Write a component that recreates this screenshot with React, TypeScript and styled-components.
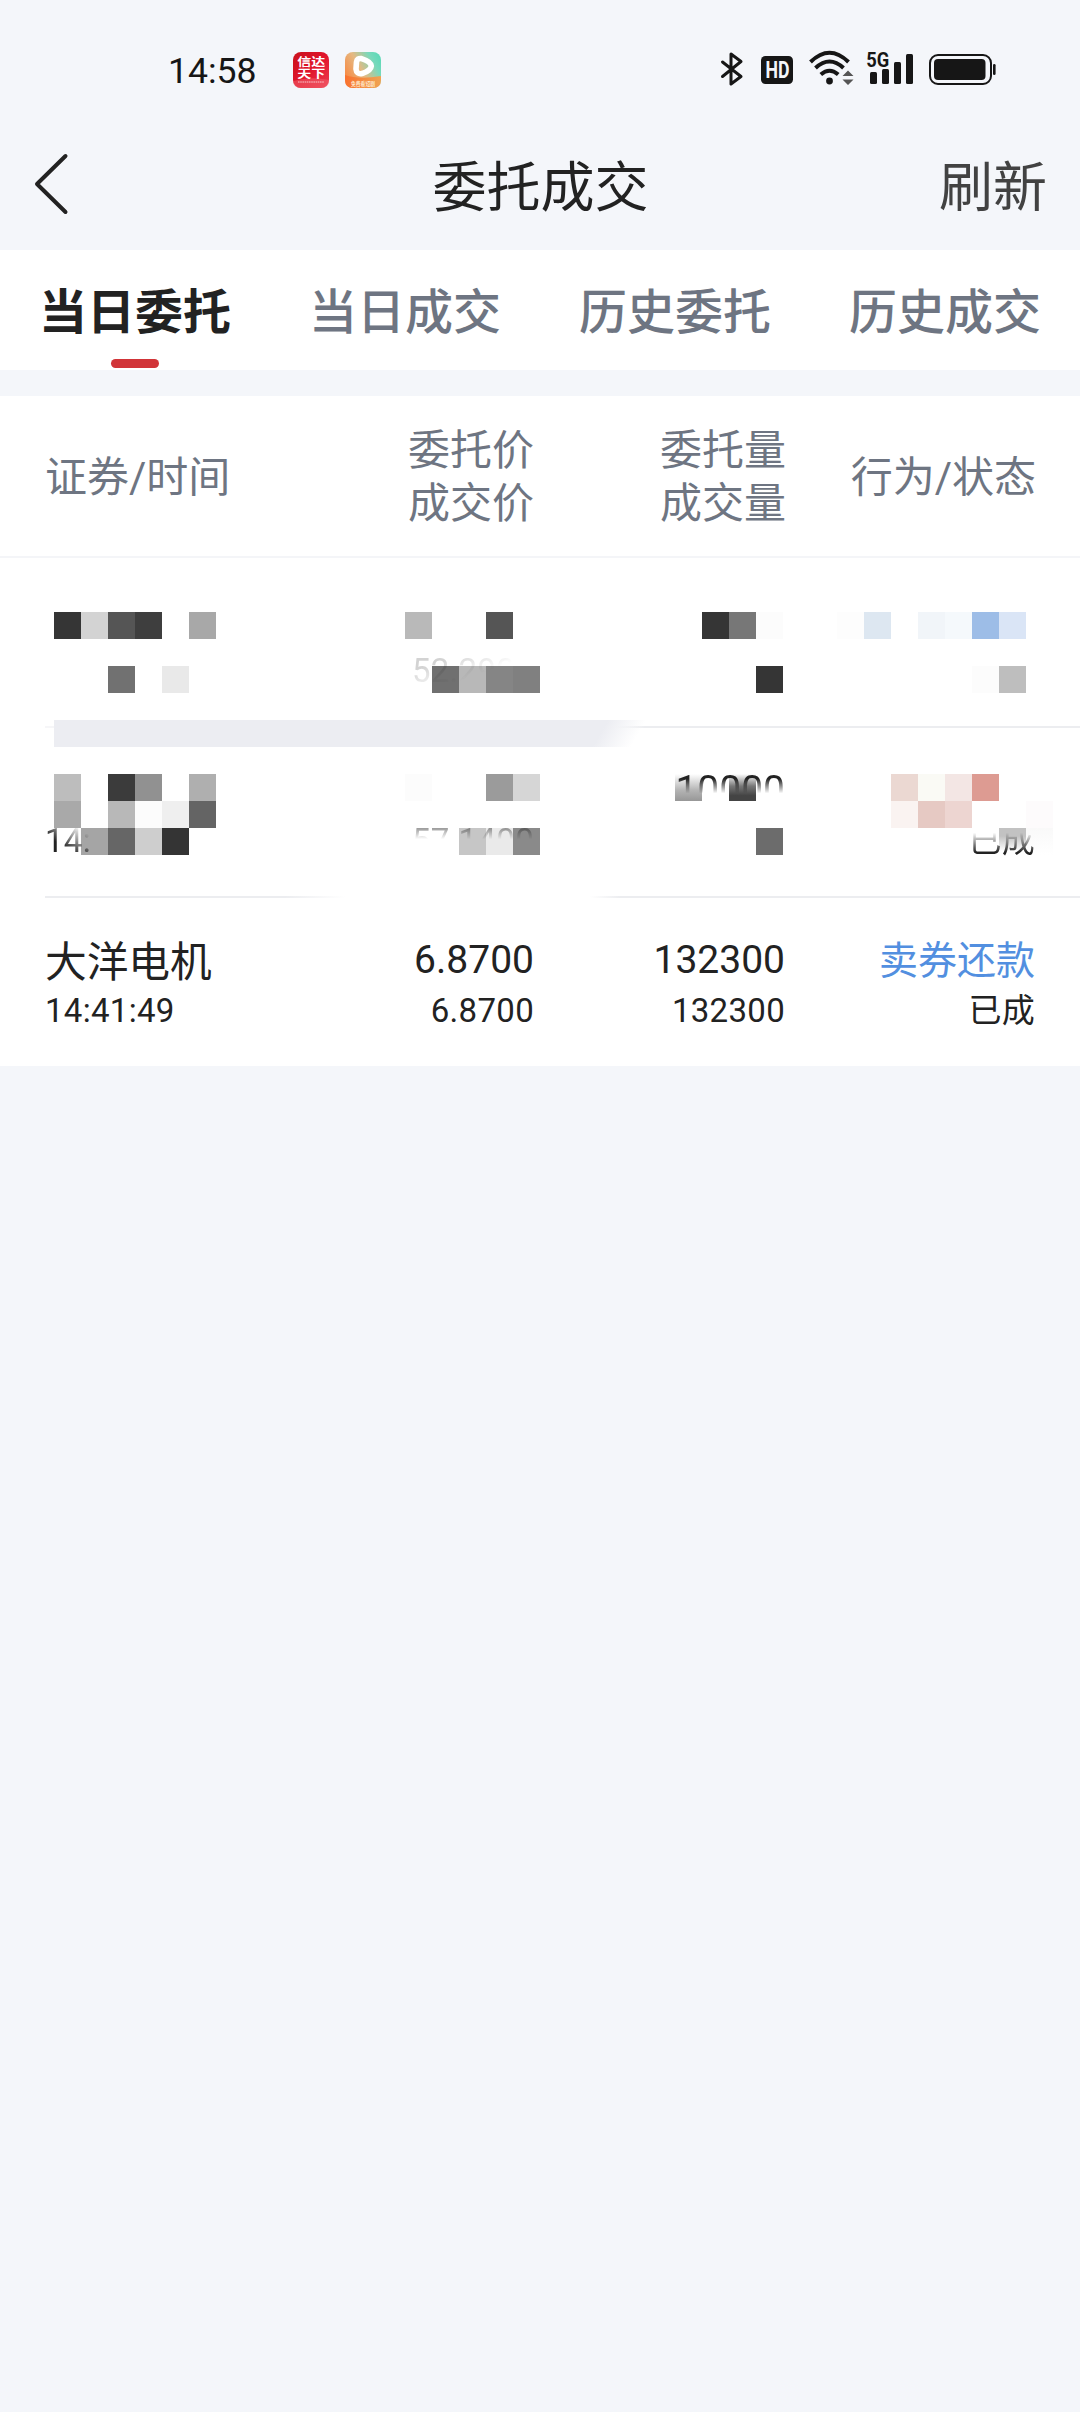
import React from "react";
import styled, { createGlobalStyle } from "styled-components";

const GlobalStyle = createGlobalStyle`
  * { box-sizing: border-box; }
  html, body { margin: 0; padding: 0; background: #f4f6fa; }
  body { font-family: Roboto, "Noto Sans CJK SC", sans-serif; color: #222; }
`;

const Page = styled.main`
  width: 1080px;
  min-height: 2412px;
  background: #f4f6fa;
  display: flex;
  flex-direction: column;
`;

const StatusBar = styled.header`
  height: 100px;
  padding: 40px 84px 0 168px;
  display: flex;
  justify-content: space-between;
`;

const StatusGroup = styled.div`
  display: flex;
  height: 60px;
  align-items: center;
`;

const Clock = styled.span`
  font-size: 35.6px;
  line-height: 60px;
  width: 125px;
  padding-top: 2px;
  color: #161616;
`;

const AppIcon = styled.svg`
  width: 36px;
  height: 36px;
  margin-right: 16px;
`;

const StatusIcon = styled.svg<{ $w: number; $gap: number }>`
  width: ${(p) => p.$w}px;
  height: 60px;
  margin-right: ${(p) => p.$gap}px;
  overflow: visible;
`;

const NavBar = styled.nav`
  height: 150px;
  display: grid;
  grid-template-columns: 216px 1fr 216px;
  align-items: center;
  padding: 27px 33px 0 34px;
  font-size: 54px;
  line-height: 80px;
`;

const BackButton = styled.button`
  border: 0;
  padding: 0;
  background: none;
  width: 36px;
  height: 66px;
  margin-bottom: 9px;
`;

const Title = styled.h1`
  margin: 0;
  font-size: inherit;
  font-weight: 400;
  text-align: center;
`;

const Refresh = styled.span`
  color: #424242;
  text-align: right;
`;

const Tabs = styled.div`
  height: 120px;
  background: #fff;
  display: grid;
  grid-template-columns: repeat(4, 1fr);
  margin-bottom: 26px;
`;

const Tab = styled.div<{ $active?: boolean }>`
  display: flex;
  flex-direction: column;
  align-items: center;
  justify-content: space-between;
  padding: 28px 0 2px;
  font-size: 48px;
  line-height: 70px;
  font-weight: ${(p) => (p.$active ? 700 : 500)};
  color: ${(p) => (p.$active ? "#222" : "#6e7582")};

  &::after {
    content: "";
    width: 48px;
    height: 9px;
    border-radius: 5px;
    background: ${(p) => (p.$active ? "#d13438" : "transparent")};
  }
`;

const Table = styled.section`
  background: #fff;
  display: flex;
  flex-direction: column;
`;

const HeadRow = styled.div`
  height: 162px;
  padding: 2px 44px 0 45px;
  border-bottom: 2px solid #f4f5f8;
  display: grid;
  grid-template-columns: 251px 238px 252px 250px;
  align-items: center;
  color: #6e7582;
  font-size: 42px;
  line-height: 53px;
`;

const HeadCell = styled.div<{ $left?: boolean }>`
  text-align: ${(p) => (p.$left ? "left" : "right")};
`;

const Body = styled.div`
  position: relative;
`;

const Row = styled.div`
  height: 168px;
  padding: 34px 44px 0 45px;
  display: grid;
  grid-template-columns: 251px 238px 251px 250px;
  align-items: start;
`;

const Divider = styled.div<{ $fill: string }>`
  height: 2px;
  margin-left: 45px;
  background: ${(p) => p.$fill};
`;

const Cell = styled.div<{ $left?: boolean }>`
  position: relative;
  z-index: 1;
  display: flex;
  flex-direction: column;
  align-items: ${(p) => (p.$left ? "flex-start" : "flex-end")};
`;

const Primary = styled.span<{ $size?: number; $drop?: number; $color?: string; $mask?: string }>`
  height: 56px;
  padding-top: ${(p) => p.$drop ?? 0}px;
  line-height: 56px;
  font-size: ${(p) => p.$size ?? 39}px;
  color: ${(p) => p.$color ?? "#222"};
  mask-image: ${(p) => p.$mask ?? "none"};
`;

const Secondary = styled.span<{ $mask?: string }>`
  height: 46px;
  line-height: 46px;
  font-size: 33px;
  letter-spacing: 0.3px;
  mask-image: ${(p) => p.$mask ?? "none"};
`;

const Mosaic = styled.div`
  position: absolute;
  top: 54px;
  left: 0;
  display: grid;
  grid-template-columns: repeat(40, 27px);
  grid-template-rows: repeat(9, 27px);
`;

const Tile = styled.i<{ $r: number; $c: number; $span?: number; $fill: string }>`
  grid-row: ${(p) => p.$r};
  grid-column: ${(p) => p.$c + 1} / span ${(p) => p.$span ?? 1};
  background: ${(p) => p.$fill};
`;

type TileData = [number, number, string, number?];

const tiles: TileData[] = [
  [1, 2, "#353535"], [1, 3, "#d3d3d3"], [1, 4, "#555555"], [1, 5, "#3e3e3e"], [1, 7, "#a8a8a8"],
  [1, 15, "#b9b9b9"], [1, 18, "#555555"],
  [1, 26, "#353535"], [1, 27, "#777777"], [1, 28, "#fcfcfc"],
  [1, 31, "#fdfdfd"], [1, 32, "#dde7f1"], [1, 34, "#f1f5f9"], [1, 35, "#f5f9fc"], [1, 36, "#9dbde7"], [1, 37, "#dae5f6"],
  [3, 4, "#717171"], [3, 6, "#e9e9e9"],
  [3, 16, "#707070"], [3, 17, "#b8b8b8"], [3, 18, "#858585"], [3, 19, "#808080"],
  [3, 28, "#353535"], [3, 36, "#fcfcfc"], [3, 37, "#bebebe"],
  [5, 2, "linear-gradient(120deg, #ecedf2 480px, rgba(236,237,242,0) 513px)", 23],
  [7, 2, "#bdbdbd"], [7, 4, "#3b3b3b"], [7, 5, "#919191"], [7, 7, "#afafaf"],
  [7, 15, "#fcfcfc"], [7, 18, "#9b9b9b"], [7, 19, "#d6d6d6"],
  [7, 25, "linear-gradient(#fff, #b4b4b4 60%, #979797)"], [7, 27, "linear-gradient(#fff, #777 45%, #444 80%)"],
  [7, 33, "#ebd8d2"], [7, 34, "#fafaf5"], [7, 35, "#f3e6e4"], [7, 36, "#dd9b92"],
  [8, 2, "#a9a9a9"], [8, 4, "#b8b8b8"], [8, 5, "#fcfcfc"], [8, 6, "#efefef"], [8, 7, "#646464"],
  [8, 33, "#faf3f1"], [8, 34, "#e6c9c3"], [8, 35, "#edd5d1"], [8, 38, "#fdfbfc"],
  [9, 3, "#a5a5a5"], [9, 4, "#666666"], [9, 5, "#cecece"], [9, 6, "#343434"],
  [9, 17, "#c6c6c6"], [9, 18, "#eaeaea"], [9, 19, "#8a8a8a"],
  [9, 28, "#6c6c6c"], [9, 37, "linear-gradient(#c2c2c2 30%, #fff 85%)"], [9, 38, "linear-gradient(#f9f9f9, #fff)"],
];

const ink = "#161616";

function StatusIcons() {
  return (
    <StatusGroup>
      <StatusIcon $w={22} $gap={18} viewBox="720.5 40 22 60">
        <path d="M722 62 L740.5 76.5 L730.5 84 V54 L740.5 61.5 L722 76.5" fill="none" stroke={ink} strokeWidth="3" strokeLinejoin="round" strokeLinecap="round" />
      </StatusIcon>
      <StatusIcon $w={32} $gap={16} viewBox="761 40 32 60">
        <rect x="761" y="56" width="32" height="28" rx="4.5" fill={ink} />
        <text x="765.5" y="78.3" fontFamily="Roboto, sans-serif" fontWeight="700" fontSize="23" textLength="24" lengthAdjust="spacingAndGlyphs" fill="#f4f6fa">HD</text>
      </StatusIcon>
      <StatusIcon $w={46} $gap={11} viewBox="809 40 46 60">
        <g fill="none" stroke={ink} strokeWidth="4">
          <path d="M810.5 62 Q829.5 43.5 848.5 62" />
          <path d="M815.5 68 Q829.5 55 843.5 68" />
          <path d="M820.8 74.5 Q829.5 67 838.2 74.5" />
        </g>
        <circle cx="829.5" cy="81" r="3.4" fill={ink} />
        <path d="M842.5 76 L848 70.5 L853.5 76 Z M842.5 79.5 L848 85 L853.5 79.5 Z" fill="#555" />
      </StatusIcon>
      <StatusIcon $w={47} $gap={16} viewBox="866 40 47 60">
        <text x="866.3" y="67.3" fontFamily="Roboto, sans-serif" fontWeight="700" fontSize="21" textLength="23" lengthAdjust="spacingAndGlyphs" fill={ink}>5G</text>
        <g fill={ink}>
          <rect x="870" y="72" width="7" height="12" rx="1.5" />
          <rect x="882" y="69" width="7" height="15" rx="1.5" />
          <rect x="894" y="62" width="7" height="22" rx="1.5" />
          <rect x="906" y="54" width="7" height="30" rx="1.5" />
        </g>
      </StatusIcon>
      <StatusIcon $w={67} $gap={0} viewBox="929 40 67 60">
        <rect x="930" y="55" width="61" height="29" rx="8" fill="none" stroke={ink} strokeWidth="2" />
        <rect x="934" y="59" width="51.5" height="21" rx="4" fill={ink} />
        <rect x="993" y="64" width="2.6" height="11" rx="1.3" fill={ink} />
      </StatusIcon>
    </StatusGroup>
  );
}

function AppIcons() {
  return (
    <>
      <AppIcon viewBox="0 0 36 36">
        <defs>
          <linearGradient id="cinda" x1="0" y1="0" x2="1" y2="1">
            <stop offset="0" stopColor="#c9121c" />
            <stop offset="0.5" stopColor="#e0142a" />
            <stop offset="1" stopColor="#ee3c50" />
          </linearGradient>
        </defs>
        <rect width="36" height="36" rx="8" fill="url(#cinda)" />
        <path d="M0 29 Q17 24 36 28 V28 Q36 36 28 36 H8 Q0 36 0 28Z" fill="#f0606c" opacity="0.55" />
        <g fontFamily="Noto Sans CJK SC, sans-serif" fontWeight="700" fill="#fff" fontSize="11.2">
          <text x="4.2" y="14" textLength="28" lengthAdjust="spacingAndGlyphs">信达</text>
          <text x="4.2" y="26" textLength="28" lengthAdjust="spacingAndGlyphs">天下</text>
        </g>
        <path d="M5 30 H31" stroke="#fff" strokeWidth="1.2" strokeDasharray="1.6 0.6" opacity="0.7" />
      </AppIcon>
      <AppIcon viewBox="0 0 36 36">
        <defs>
          <linearGradient id="play" x1="0" y1="0.75" x2="1" y2="0.2">
            <stop offset="0" stopColor="#f9843c" />
            <stop offset="0.45" stopColor="#e5b982" />
            <stop offset="0.8" stopColor="#79d9bb" />
            <stop offset="1" stopColor="#5ed9b8" />
          </linearGradient>
          <linearGradient id="playBase" x1="0" y1="0" x2="1" y2="0">
            <stop offset="0" stopColor="#f9722f" />
            <stop offset="1" stopColor="#efa352" />
          </linearGradient>
        </defs>
        <rect width="36" height="36" rx="8" fill="url(#play)" />
        <path d="M0 23 Q14 28 36 24 V28 Q36 36 28 36 H8 Q0 36 0 28Z" fill="url(#playBase)" />
        <path d="M11.5 10 Q12 6 16.5 6.6 Q26 9.5 26.3 14 Q26 18.5 17 21.6 Q11.5 22.5 11 17Z" fill="none" stroke="#fff" strokeWidth="5.6" strokeLinejoin="round" />
        <text x="6" y="33.8" fontFamily="Noto Sans CJK SC, sans-serif" fontWeight="700" fontSize="5.8" textLength="24" lengthAdjust="spacingAndGlyphs" fill="#fde6c8">免费看短剧</text>
      </AppIcon>
    </>
  );
}

const fade = {
  faintTop: "linear-gradient(160deg, rgba(0,0,0,.2) 25%, transparent 56%)",
  capTop: "linear-gradient(rgba(0,0,0,.45) 22%, transparent 46%)",
  strongTop: "linear-gradient(#000 30%, transparent 56%)",
  bottom: "linear-gradient(transparent 32%, #000 75%)",
  corner: "linear-gradient(35deg, #000 38%, transparent 78%)",
};

export default function App() {
  return (
    <>
      <GlobalStyle />
      <Page>
        <StatusBar>
          <StatusGroup>
            <Clock>14:58</Clock>
            <AppIcons />
          </StatusGroup>
          <StatusIcons />
        </StatusBar>
        <NavBar>
          <BackButton aria-label="返回">
            <svg width="36" height="66" viewBox="0 0 36 66">
              <path d="M31.5 5 L3 33 L31.5 61" fill="none" stroke="#222" strokeWidth="4" strokeLinecap="round" strokeLinejoin="round" />
            </svg>
          </BackButton>
          <Title>委托成交</Title>
          <Refresh>刷新</Refresh>
        </NavBar>
        <Tabs>
          <Tab $active>当日委托</Tab>
          <Tab>当日成交</Tab>
          <Tab>历史委托</Tab>
          <Tab>历史成交</Tab>
        </Tabs>
        <Table>
          <HeadRow>
            <HeadCell $left>证券/时间</HeadCell>
            <HeadCell>委托价<br />成交价</HeadCell>
            <HeadCell>委托量<br />成交量</HeadCell>
            <HeadCell>行为/状态</HeadCell>
          </HeadRow>
          <Body>
            <Mosaic>
              {tiles.map(([r, c, fill, span]) => (
                <Tile key={`${r}-${c}`} $r={r} $c={c} $fill={fill} $span={span} />
              ))}
            </Mosaic>
            <Row>
              <Cell />
              <Cell>
                <Primary />
                <Secondary $mask={fade.faintTop}>52.2900</Secondary>
              </Cell>
            </Row>
            <Divider $fill="linear-gradient(90deg, #f6f6f8 10px, transparent 20px, transparent 570px, #ecedf0 600px)" />
            <Row>
              <Cell $left>
                <Primary />
                <Secondary $mask={fade.corner}>14:</Secondary>
              </Cell>
              <Cell>
                <Primary />
                <Secondary $mask={fade.capTop}>57.1400</Secondary>
              </Cell>
              <Cell>
                <Primary $mask={fade.strongTop}>10000</Primary>
              </Cell>
              <Cell>
                <Primary />
                <Secondary $mask={fade.bottom}>已成</Secondary>
              </Cell>
            </Row>
            <Divider $fill="linear-gradient(90deg, #ecedf0 240px, transparent 300px, transparent 545px, #ecedf0 575px)" />
            <Row>
              <Cell $left>
                <Primary $size={41.7} $drop={3}>大洋电机</Primary>
                <Secondary>14:41:49</Secondary>
              </Cell>
              <Cell>
                <Primary>6.8700</Primary>
                <Secondary>6.8700</Secondary>
              </Cell>
              <Cell>
                <Primary>132300</Primary>
                <Secondary>132300</Secondary>
              </Cell>
              <Cell>
                <Primary $color="#528fe0" $drop={1}>卖券还款</Primary>
                <Secondary>已成</Secondary>
              </Cell>
            </Row>
          </Body>
        </Table>
      </Page>
    </>
  );
}
